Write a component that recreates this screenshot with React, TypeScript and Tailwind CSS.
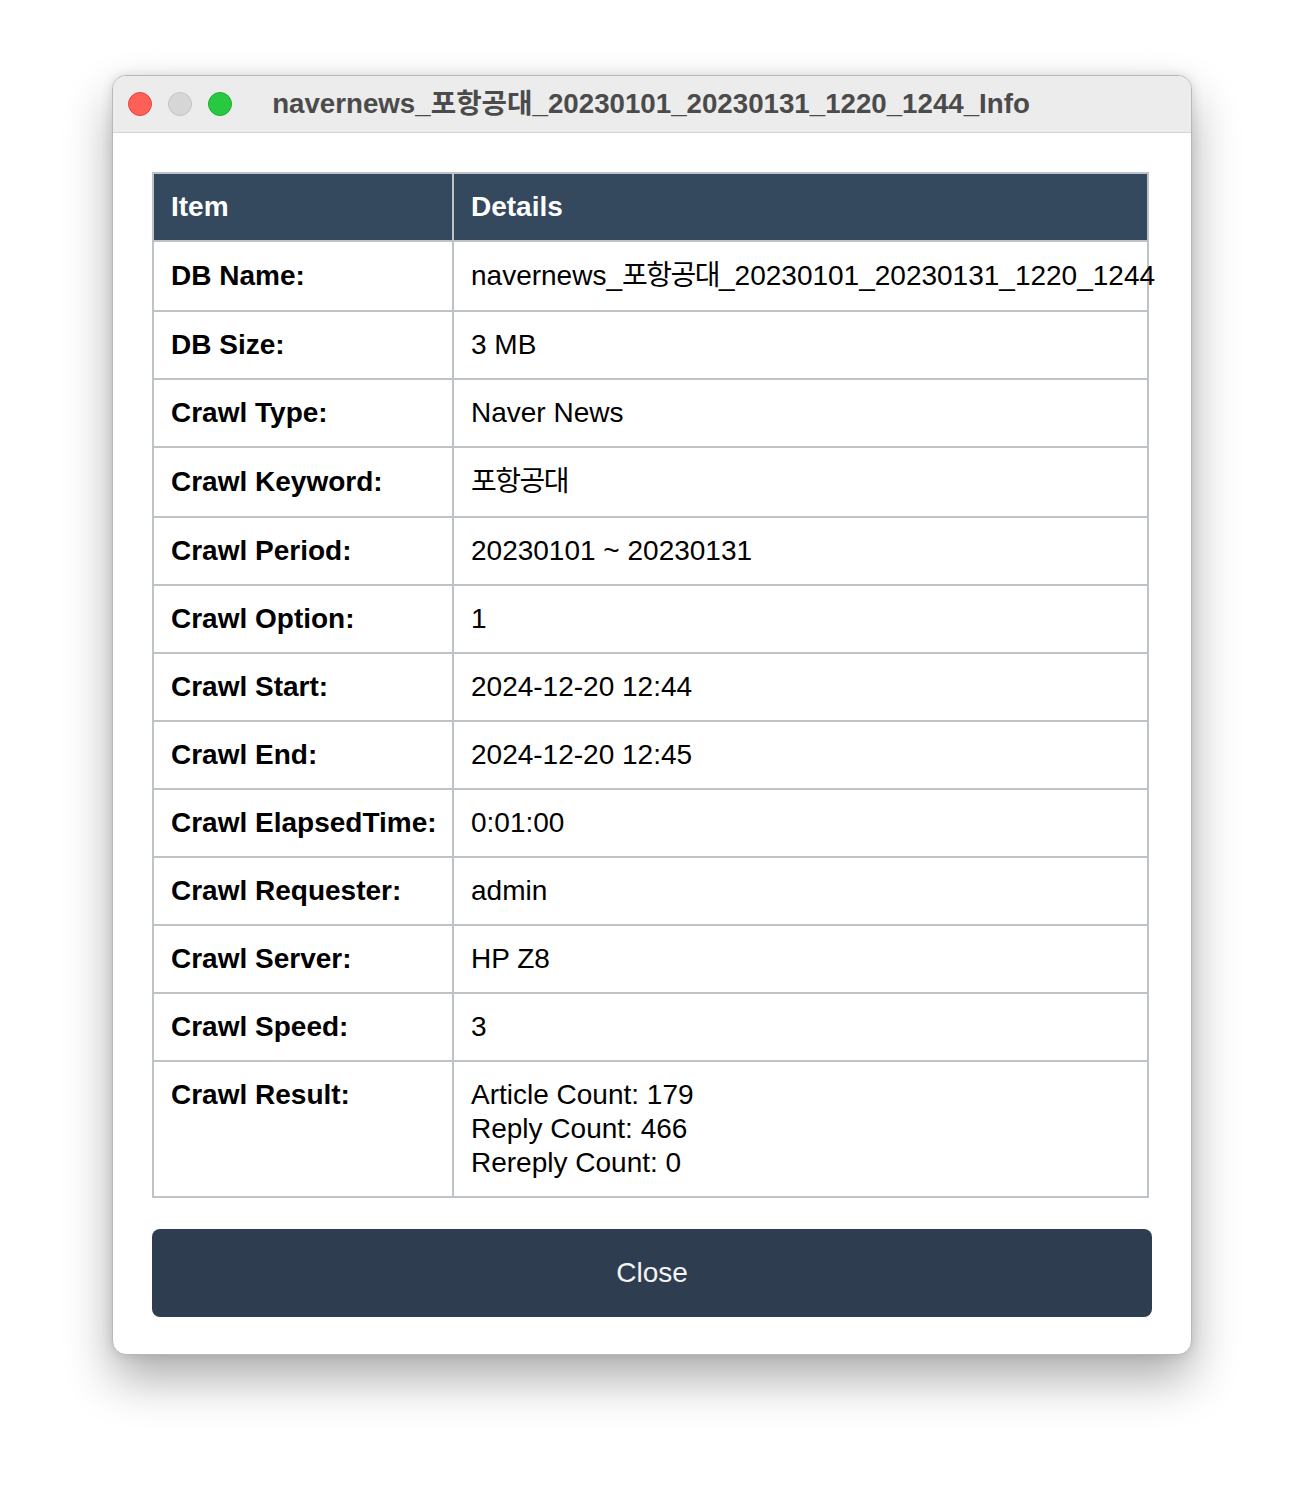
import React from "react";

const Ko = ({ children }: { children: React.ReactNode }) => (
  <span className="tracking-[-1.5px]">{children}</span>
);

const rows: { label: string; value: React.ReactNode; ko?: boolean }[] = [
  {
    label: "DB Name:",
    value: (
      <>
        navernews_<Ko>포항공대</Ko>_20230101_20230131_1220_1244
      </>
    ),
    ko: true,
  },
  { label: "DB Size:", value: "3 MB" },
  { label: "Crawl Type:", value: "Naver News" },
  { label: "Crawl Keyword:", value: <Ko>포항공대</Ko>, ko: true },
  { label: "Crawl Period:", value: "20230101 ~ 20230131" },
  { label: "Crawl Option:", value: "1" },
  { label: "Crawl Start:", value: "2024-12-20 12:44" },
  { label: "Crawl End:", value: "2024-12-20 12:45" },
  { label: "Crawl ElapsedTime:", value: "0:01:00" },
  { label: "Crawl Requester:", value: "admin" },
  { label: "Crawl Server:", value: "HP Z8" },
  { label: "Crawl Speed:", value: "3" },
  {
    label: "Crawl Result:",
    value: (
      <>
        Article Count: 179
        <br />
        Reply Count: 466
        <br />
        Rereply Count: 0
      </>
    ),
  },
];

export default function App() {
  return (
    <div
      className="w-[1304px] h-[1504px] bg-white flex justify-center pt-[75px]"
      style={{ fontFamily: '"Liberation Sans", Arial, "Noto Sans CJK KR", sans-serif' }}
    >
      <div className="w-[1080px] h-[1280px] bg-white rounded-[14px] border border-[#b8b8b8] shadow-[0_24px_48px_rgba(0,0,0,0.32),0_0_12px_rgba(0,0,0,0.12)] overflow-hidden flex flex-col">
        <div className="h-[57px] shrink-0 bg-[#ececec] border-b border-[#d2d2d2] flex items-center relative">
          <div className="flex items-center gap-[16px] pl-[15px]">
            <div className="w-[24px] h-[24px] rounded-full bg-[#fe5f57] border border-[#e1463f]" />
            <div className="w-[24px] h-[24px] rounded-full bg-[#d6d6d6] border border-[#c4c4c4]" />
            <div className="w-[24px] h-[24px] rounded-full bg-[#28c840] border border-[#1fab32]" />
          </div>
          <div className="absolute inset-0 flex items-center justify-center pointer-events-none">
            <span className="text-[27.7px] font-bold text-[#4b4b4b] pr-[2px]">
              navernews_포항공대_20230101_20230131_1220_1244_Info
            </span>
          </div>
        </div>
        <div className="flex-1 px-[39px] pt-[39px] flex flex-col">
          <table className="w-[997px] table-fixed border-collapse border-2 border-[#bdc3c7] text-[28px] leading-[34px] text-black">
            <colgroup>
              <col className="w-[300px]" />
              <col />
            </colgroup>
            <thead>
              <tr className="bg-[#34495e] text-white">
                <th className="border-2 border-[#bdc3c7] px-[17px] py-[16px] text-left font-bold align-top">Item</th>
                <th className="border-2 border-[#bdc3c7] px-[17px] py-[16px] text-left font-bold align-top">Details</th>
              </tr>
            </thead>
            <tbody>
              {rows.map((r) => (
                <tr key={r.label}>
                  <td
                    className={
                      "border-2 border-[#bdc3c7] px-[17px] py-[16px] font-bold align-top whitespace-nowrap " +
                      (r.ko ? "leading-[36px]" : "")
                    }
                  >
                    {r.label}
                  </td>
                  <td
                    className={
                      "border-2 border-[#bdc3c7] px-[17px] py-[16px] align-top whitespace-nowrap " +
                      (r.ko ? "leading-[36px]" : "")
                    }
                  >
                    {r.value}
                  </td>
                </tr>
              ))}
            </tbody>
          </table>
          <button className="mt-[31px] w-[1000px] h-[88px] rounded-[8px] bg-[#2e3e50] text-[#f4f4f4] text-[28px] flex items-center justify-center">
            Close
          </button>
        </div>
      </div>
    </div>
  );
}
